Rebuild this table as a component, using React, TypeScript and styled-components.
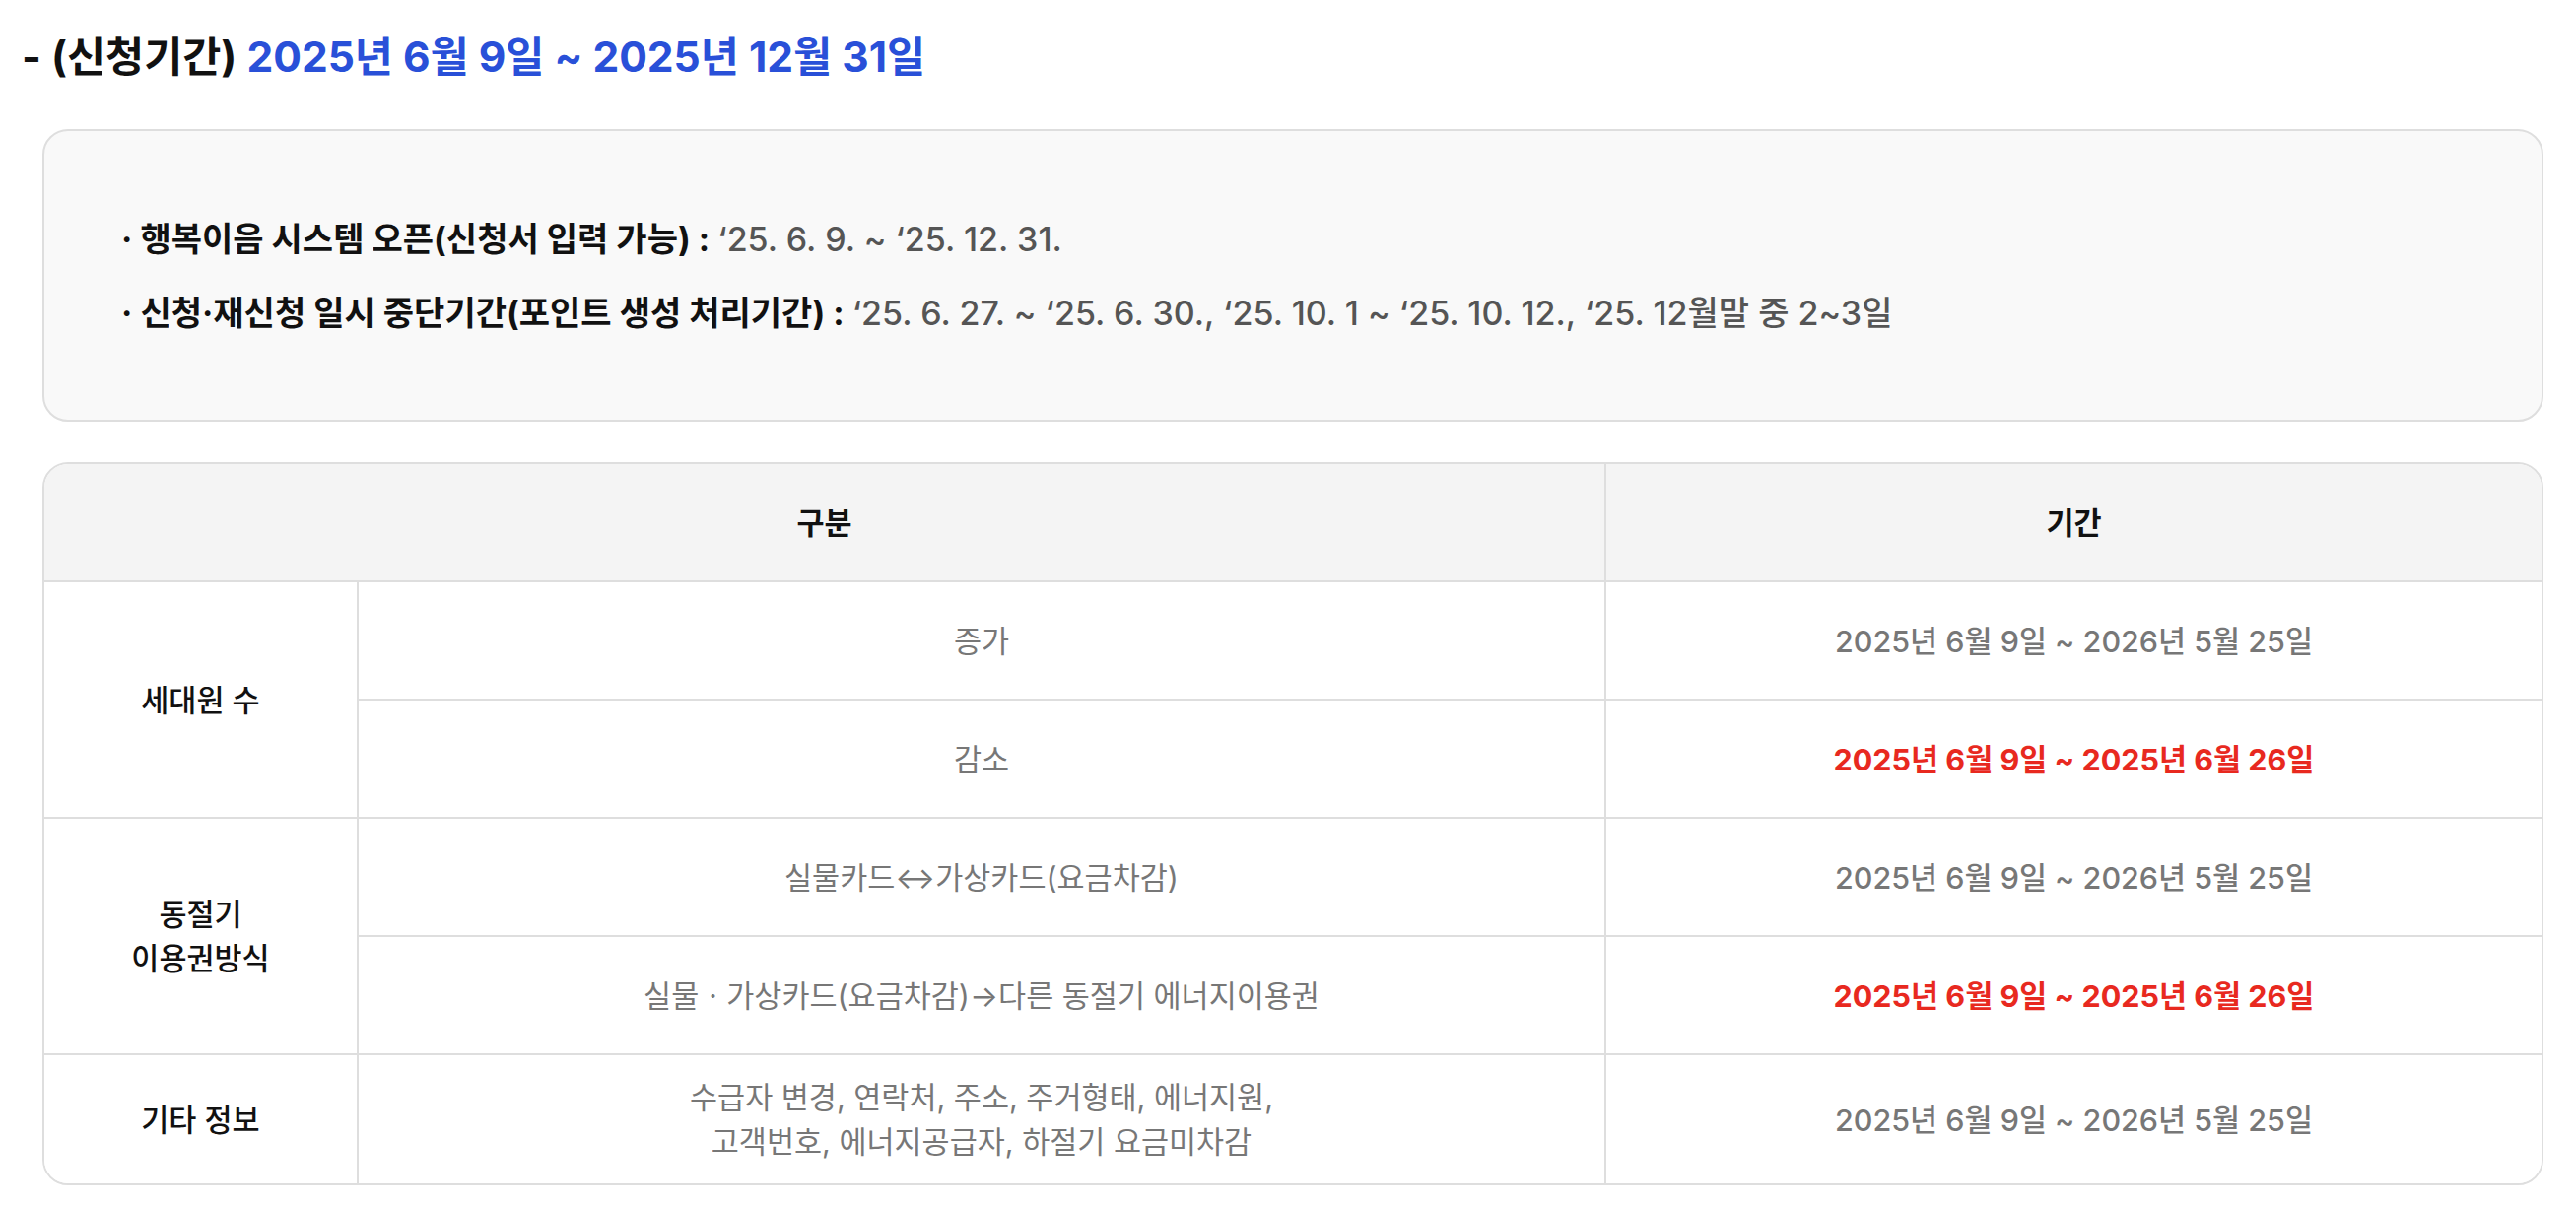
import React from 'react';
import styled, { createGlobalStyle } from 'styled-components';

const GlobalStyle = createGlobalStyle`
  html,
  body {
    margin: 0;
    padding: 0;
    background: #fff;
  }

  body {
    font-family: Inter, 'Noto Sans CJK KR', sans-serif;
    color: #111;
  }
`;

const Page = styled.main`
  padding: 28px 33px 22px 22px;
`;

const Heading = styled.h3`
  margin: 0 0 43px;
  font-size: 42.5px;
  line-height: 60px;
  font-weight: 700;
  color: #111;

  > span {
    color: #2950d8;
  }
`;

const Content = styled.div`
  display: flex;
  flex-direction: column;
  gap: 41px;
  margin-left: 21px;
`;

const InfoBox = styled.section`
  background: #f9f9f9;
  border: 2px solid #dedede;
  border-radius: 26px;
  padding: 86px 78px 84px;
`;

const InfoList = styled.ul`
  list-style: none;
  margin: 0;
  padding: 0;
  display: flex;
  flex-direction: column;
  gap: 27px;
`;

const InfoItem = styled.li`
  font-size: 34px;
  line-height: 48px;
  font-weight: 700;
  color: #111;

  &::before {
    content: '· ';
  }
`;

const InfoValue = styled.span`
  font-weight: 500;
  color: #555;
`;

const Table = styled.div`
  display: grid;
  grid-template-columns: 319px 1266px 1fr;
  grid-auto-rows: minmax(120px, auto);
  border: 2px solid #dedede;
  border-radius: 26px;
  overflow: hidden;
  background: #fff;
`;

type Tone = 'head' | 'label' | 'item' | 'date' | 'alert';

const tones: Record<Tone, { color: string; weight: number; bg: string }> = {
  head: { color: '#111', weight: 700, bg: '#f4f4f4' },
  label: { color: '#111', weight: 500, bg: '#fff' },
  item: { color: '#777', weight: 400, bg: '#fff' },
  date: { color: '#777', weight: 500, bg: '#fff' },
  alert: { color: '#e8291f', weight: 700, bg: '#fff' },
};

const Cell = styled.div<{
  $tone: Tone;
  $cols?: number;
  $rows?: number;
  $lastCol?: boolean;
  $lastRow?: boolean;
}>`
  box-sizing: border-box;
  display: flex;
  align-items: center;
  justify-content: center;
  padding: 20px 16px;
  text-align: center;
  font-size: 30.5px;
  line-height: 45px;
  color: ${(p) => tones[p.$tone].color};
  font-weight: ${(p) => tones[p.$tone].weight};
  background: ${(p) => tones[p.$tone].bg};
  grid-column: span ${(p) => p.$cols ?? 1};
  grid-row: span ${(p) => p.$rows ?? 1};
  border-right: ${(p) => (p.$lastCol ? 'none' : '2px solid #dedede')};
  border-bottom: ${(p) => (p.$lastRow ? 'none' : '2px solid #dedede')};
`;

const App = () => {
  return (
    <>
      <GlobalStyle />
      <Page>
        <Heading>
          - (신청기간) <span>2025년 6월 9일 ~ 2025년 12월 31일</span>
        </Heading>

        <Content>
          <InfoBox>
            <InfoList>
              <InfoItem>
                행복이음 시스템 오픈(신청서 입력 가능) :{' '}
                <InfoValue>‘25. 6. 9. ~ ‘25. 12. 31.</InfoValue>
              </InfoItem>
              <InfoItem>
                신청·재신청 일시 중단기간(포인트 생성 처리기간) :{' '}
                <InfoValue>
                  ‘25. 6. 27. ~ ‘25. 6. 30., ‘25. 10. 1 ~ ‘25. 10. 12., ‘25. 12월말 중 2~3일
                </InfoValue>
              </InfoItem>
            </InfoList>
          </InfoBox>

          <Table>
            <Cell $tone="head" $cols={2}>
              구분
            </Cell>
            <Cell $tone="head" $lastCol>
              기간
            </Cell>

            <Cell $tone="label" $rows={2}>
              세대원 수
            </Cell>
            <Cell $tone="item">증가</Cell>
            <Cell $tone="date" $lastCol>
              2025년 6월 9일 ~ 2026년 5월 25일
            </Cell>
            <Cell $tone="item">감소</Cell>
            <Cell $tone="alert" $lastCol>
              2025년 6월 9일 ~ 2025년 6월 26일
            </Cell>

            <Cell $tone="label" $rows={2}>
              동절기
              <br />
              이용권방식
            </Cell>
            <Cell $tone="item">실물카드↔가상카드(요금차감)</Cell>
            <Cell $tone="date" $lastCol>
              2025년 6월 9일 ~ 2026년 5월 25일
            </Cell>
            <Cell $tone="item">실물ㆍ가상카드(요금차감)→다른 동절기 에너지이용권</Cell>
            <Cell $tone="alert" $lastCol>
              2025년 6월 9일 ~ 2025년 6월 26일
            </Cell>

            <Cell $tone="label" $lastRow>
              기타 정보
            </Cell>
            <Cell $tone="item" $lastRow>
              수급자 변경, 연락처, 주소, 주거형태, 에너지원,
              <br />
              고객번호, 에너지공급자, 하절기 요금미차감
            </Cell>
            <Cell $tone="date" $lastCol $lastRow>
              2025년 6월 9일 ~ 2026년 5월 25일
            </Cell>
          </Table>
        </Content>
      </Page>
    </>
  );
};

export default App;
